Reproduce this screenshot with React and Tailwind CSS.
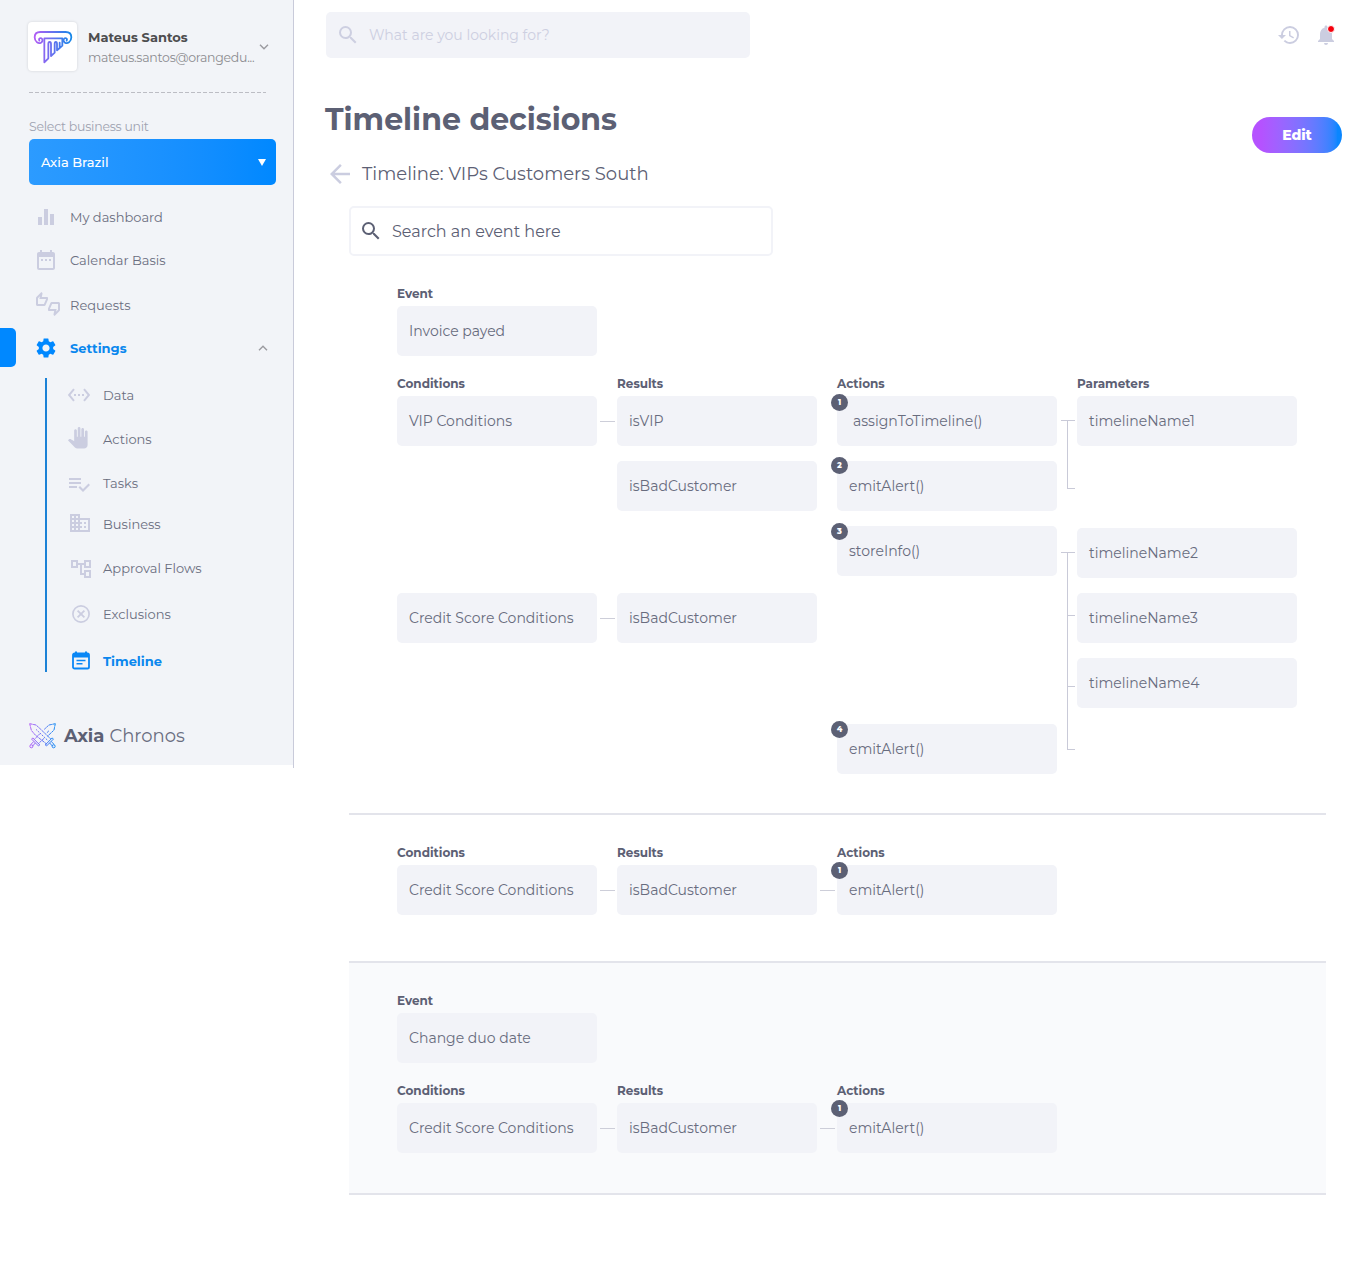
import React from "react";
import {
  MdArrowBack, MdBusiness, MdDateRange, MdEqualizer, MdHistory, MdNotifications,
  MdOutlineAccountTree, MdOutlineThumbsUpDown, MdPanTool, MdSearch, MdSettings, MdSettingsEthernet,
} from "react-icons/md";

function ColumnLogo() {
  return (
    <svg viewBox="24 30 147 147" className="size-[49px]" fill="none" stroke="url(#col)" strokeWidth="5.4" strokeLinejoin="round" strokeLinecap="round">
      <defs>
        <linearGradient id="col" gradientUnits="userSpaceOnUse" x1="42" y1="90" x2="156" y2="90">
          <stop offset="0" stopColor="#b35cf5" />
          <stop offset="1" stopColor="#1488e8" />
        </linearGradient>
      </defs>
      <path d="M58 86 C54 79 64 75 67 82 C70 91 59 97 51 91 C46 87 44 82 44 76 C44 66 51 60 61 60 H137 C147 60 154 66 154 76 C154 82 152 87 147 91 C139 97 128 91 131 82 C134 75 144 79 140 86" />
      <path d="M73 79 H127 V101 L119 108 V92 M73 79 V151 L85 139 V96 C85 88 93 88 93 96 V132 L104 122 V96 C104 88 111 88 111 96 V115 L119 108" />
    </svg>
  );
}

function SwordsLogo() {
  return (
    <svg viewBox="29 39 80 77" className="h-[26px] w-[27px]" fill="none" stroke="url(#swd)" strokeWidth="2.9">
      <defs>
        <linearGradient id="swd" gradientUnits="userSpaceOnUse" x1="30" y1="80" x2="108" y2="80">
          <stop offset="0" stopColor="#b45cf6" />
          <stop offset="1" stopColor="#128af2" />
        </linearGradient>
      </defs>
      <path d="M31 41 L50 45 L62 56 L94 87 M31 41 L36 61 L48 75 L82 102" strokeDasharray="9 1.5" />
      <path d="M50 58 L86 92" strokeDasharray="5 3" />
      <path d="M107 41 L88 45 L74 58 M107 41 L103 60 L84 78 M62 70 L45 87 M74 84 L56 101 M88 62 L82 68" strokeDasharray="9 1.5" />
      <path d="M77 104 L98 83 L101 87 L81 107 Z M61 104 L40 83 L37 87 L57 107 Z" />
      <path d="M90 98 L99 108 M95 94 L104 103 M48 98 L39 108 M43 94 L34 103" />
      <circle cx="102" cy="108" r="4.5" />
      <circle cx="36" cy="108" r="4.5" />
    </svg>
  );
}

function TasksIcon() {
  return (
    <svg viewBox="0 0 24 24" className="size-6" fill="currentColor">
      <path d="M14 10H2v2h12v-2zm0-4H2v2h12V6zM2 16h8v-2H2v2zm19.5-4.5L23 13l-6.99 7-4.51-4.5L13 14l3.01 3 5.49-5.5z" />
    </svg>
  );
}

function ExclusionIcon() {
  return (
    <svg viewBox="0 0 18 18" className="mt-0.5 size-[18px]" fill="none" stroke="currentColor">
      <circle cx="9" cy="9" r="8.1" strokeWidth="1.7" />
      <path d="M5.6 5.6 L12.4 12.4 M12.4 5.6 L5.6 12.4" strokeWidth="1.8" />
    </svg>
  );
}

function TimelineIcon() {
  return (
    <svg viewBox="0 0 18 19" className="h-[19px] w-[18px]" fill="none">
      <path d="M4 0.5 V4 M14 0.5 V4" stroke="#0a87f5" strokeWidth="2" />
      <rect x="1" y="2.5" width="16" height="15" rx="1.6" stroke="#0a87f5" strokeWidth="1.8" />
      <path d="M1 2.5 H17 V6.5 H1 Z" fill="#0a87f5" />
      <path d="M4.5 9.5 H13.5 M4.5 12.8 H10.5" stroke="#0a87f5" strokeWidth="1.6" />
    </svg>
  );
}

function Chevron({ up }) {
  return (
    <svg viewBox="0 0 10 6" className="h-1.5 w-2.5" fill="none" stroke="#9a9a9f" strokeWidth="1.4">
      <path d={up ? "M1 5.2 L5 1.2 L9 5.2" : "M1 0.8 L5 4.8 L9 0.8"} />
    </svg>
  );
}

function MainItem({ icon, label, className = "" }) {
  return (
    <li className={`flex h-6 items-center pl-[34px] ${className}`}>
      <span className="w-9 shrink-0 text-[#cbcde0]">{icon}</span>
      <span className="pt-0.5">{label}</span>
    </li>
  );
}

function SubItem({ icon, label, className = "h-6", iconClass = "pl-0" }) {
  return (
    <li className={`flex items-center ${className}`}>
      <span className={`w-9 shrink-0 text-[#cbcde0] ${iconClass}`}>{icon}</span>
      <span>{label}</span>
    </li>
  );
}

function Sidebar() {
  return (
    <aside className="h-[768px] w-[294px] shrink-0 text-[13px] text-[#6a6e80]">
      <div className="flex h-full border-r border-[#c9cbda]">
        <div className="h-[765px] w-full bg-[#f2f4f8]">
          <div className="flex pt-[22px] pl-7">
            <div className="size-[49px] shrink-0 rounded bg-white shadow-[0_0_3px_rgba(0,0,0,0.14)]">
              <ColumnLogo />
            </div>
            <div className="ml-[11px] w-[167px] pt-[5px] leading-5 whitespace-nowrap">
              <p className="font-bold text-[#4d4d4f]">Mateus Santos</p>
              <p className="pt-px text-[12.5px] leading-[19px] tracking-[-0.26px] text-[#8c8c90]">mateus.santos@orangedu...</p>
            </div>
            <div className="ml-1 pt-[22px]"><Chevron /></div>
          </div>
          <div className="mt-[21px] ml-[29px] h-px w-[237px] bg-[repeating-linear-gradient(90deg,#bcbdc4_0_4px,transparent_4px_6px)]" />
          <p className="mt-[25px] ml-[29px] text-[12.5px] leading-[18px] tracking-[-0.25px] text-[#a0a3b1]">Select business unit</p>
          <button className="mt-[3px] ml-[29px] flex h-[46px] w-[247px] items-center justify-between rounded-[5px] bg-linear-to-r from-[#2c9bff] to-[#0088ff] pr-2.5 pl-3 font-medium text-white">
            <span className="pt-0.5">Axia Brazil</span>
            <svg viewBox="0 0 8 7" className="h-[7px] w-2" fill="white"><path d="M0 0 H8 L4 7 Z" /></svg>
          </button>

          <ul>
            <MainItem className="mt-5" icon={<MdEqualizer size={24} />} label="My dashboard" />
            <MainItem className="mt-[19px]" icon={<MdDateRange size={24} />} label="Calendar Basis" />
            <MainItem className="mt-[21px]" icon={<MdOutlineThumbsUpDown size={24} className="-mt-0.5 ml-0.5" />} label="Requests" />
            <li className="mt-[11px] flex h-[39px] items-center">
              <span className="h-full w-4 rounded-r-[5px] bg-[#0088ff]" />
              <MdSettings size={24} className="ml-[18px] text-[#0088ff]" />
              <span className="ml-3 w-[188px] pt-0.5 font-bold text-[#0a87ee]">Settings</span>
              <Chevron up />
            </li>
          </ul>

          <ul className="mt-[11px] ml-[45px] h-[294px] border-l-2 border-[#1c82d6] pl-5">
            <SubItem className="h-[35px]" iconClass="pb-px" icon={<MdSettingsEthernet size={24} />} label="Data" />
            <SubItem className="mt-[13px] h-7" iconClass="pb-1" icon={<MdPanTool size={21.5} />} label="Actions" />
            <SubItem className="mt-[18px] h-6" icon={<TasksIcon />} label="Tasks" />
            <SubItem className="mt-[17px] h-6" iconClass="pl-px pb-1" icon={<MdBusiness size={24} />} label="Business" />
            <SubItem className="mt-5 h-6" iconClass="pl-0.5" icon={<MdOutlineAccountTree size={24} />} label="Approval Flows" />
            <SubItem className="mt-[22px] h-6" iconClass="pl-[5px] pb-1" icon={<ExclusionIcon />} label="Exclusions" />
            <li className="mt-[23px] flex h-6 items-center font-bold text-[#0a87ee]">
              <span className="w-9 pb-1 pl-[5px]"><TimelineIcon /></span>
              <span>Timeline</span>
            </li>
          </ul>

          <div className="mt-[50px] ml-[29px] flex h-7 items-center text-lg">
            <SwordsLogo />
            <span className="ml-2 font-bold text-[#5c6074]">Axia</span>
            <span className="ml-[5px]">Chronos</span>
          </div>
        </div>
      </div>
    </aside>
  );
}

function Label({ children }) {
  return <h3 className="mb-1 h-4 text-xs leading-4 font-bold">{children}</h3>;
}

function Cell({ children, badge, badgeClass = "-top-[3px]", className = "px-3" }) {
  return (
    <div className={`relative flex h-[50px] w-full items-center rounded-[5px] bg-[#f2f3f8] text-[#686c7e] ${className}`}>
      {badge && (
        <span className={`absolute -left-1.5 flex size-[17px] items-center justify-center rounded-full bg-[#5c6074] pb-px text-[8px] leading-none font-extrabold text-white ${badgeClass}`}>
          {badge}
        </span>
      )}
      {children}
    </div>
  );
}

function Link({ className = "mt-[45px]" }) {
  return <div className={`mr-0.5 ml-[3px] h-px w-[15px] shrink-0 bg-[#cdced9] ${className}`} />;
}

function Tick({ className }) {
  return <div className={`ml-1.5 w-2 border-b border-l border-[#c9cad8] ${className}`} />;
}

function EventBlock({ name }) {
  return (
    <div className="mb-5 w-[200px]">
      <Label>Event</Label>
      <Cell>{name}</Cell>
    </div>
  );
}

function SimpleFlow() {
  return (
    <div className="flex">
      <div className="w-[200px]"><Label>Conditions</Label><Cell>Credit Score Conditions</Cell></div>
      <Link />
      <div className="w-[200px]"><Label>Results</Label><Cell>isBadCustomer</Cell></div>
      <Link />
      <div className="w-[220px]"><Label>Actions</Label><Cell badge="1">emitAlert()</Cell></div>
    </div>
  );
}

function FullFlow() {
  return (
    <div className="flex">
      <div className="w-[200px]">
        <Label>Conditions</Label>
        <Cell>VIP Conditions</Cell>
        <Cell className="mt-[147px] px-3">Credit Score Conditions</Cell>
      </div>
      <div>
        <Link />
        <Link className="mt-[196px]" />
      </div>
      <div className="w-[200px]">
        <Label>Results</Label>
        <Cell>isVIP</Cell>
        <Cell className="mt-[15px] px-3">isBadCustomer</Cell>
        <Cell className="mt-[82px] px-3">isBadCustomer</Cell>
      </div>
      <div className="ml-5 w-[220px]">
        <Label>Actions</Label>
        <Cell badge="1" badgeClass="-top-0.5" className="px-4">assignToTimeline()</Cell>
        <Cell badge="2" badgeClass="-top-1" className="mt-[15px] px-3">emitAlert()</Cell>
        <Cell badge="3" className="mt-[15px] px-3">storeInfo()</Cell>
        <Cell badge="4" className="mt-[148px] px-3">emitAlert()</Cell>
      </div>
      <div className="w-5 pt-11 pl-1">
        <div className="h-px w-3.5 bg-[#c9cad8]" />
        <Tick className="h-[68px]" />
        <div className="mt-[63px] h-px w-3.5 bg-[#c9cad8]" />
        <Tick className="h-[63px]" />
        <Tick className="h-[71px]" />
        <Tick className="h-[63px]" />
      </div>
      <div className="w-[220px]">
        <Label>Parameters</Label>
        <Cell>timelineName1</Cell>
        <Cell className="mt-[82px] px-3">timelineName2</Cell>
        <Cell className="mt-[15px] px-3">timelineName3</Cell>
        <Cell className="mt-[15px] px-3">timelineName4</Cell>
      </div>
    </div>
  );
}

export default function App() {
  return (
    <div className="flex min-h-[1281px] bg-white font-['Montserrat','Open_Sans',sans-serif] text-[#5c6074]">
      <Sidebar />
      <main className="flex-1 text-sm">
        <header className="flex items-center pt-3 pl-8">
          <div className="flex h-[46px] w-[424px] items-center rounded-[5px] bg-[#f2f3f8] pl-2.5 text-[#cdcfe1]">
            <MdSearch size={24} />
            <span className="ml-[9px]">What are you looking for?</span>
          </div>
          <MdHistory size={24} className="ml-[527px] text-[#cbcde0]" />
          <div className="relative ml-[13px]">
            <MdNotifications size={24} className="text-[#cbcde0]" />
            <span className="absolute top-[2px] right-[3px] size-2 rounded-full border border-white bg-[#f5000c]" />
          </div>
        </header>

        <div className="flex justify-between pt-[41px] pr-6 pl-[31px]">
          <h1 className="pt-px text-[30px] leading-10 font-bold">Timeline decisions</h1>
          <button className="mt-[18px] h-9 w-[90px] rounded-full bg-linear-to-r from-[#b552ff] from-10% to-[#0a86ff] to-95% font-extrabold tracking-[-0.1px] text-white">Edit</button>
        </div>

        <div className="mt-1.5 flex h-[30px] items-center pl-[31px] text-lg">
          <MdArrowBack size={30} className="text-[#cbcde0]" />
          <h2 className="ml-[7px]">Timeline: VIPs Customers South</h2>
        </div>

        <div className="mt-[17px] ml-[55px] flex h-[50px] w-[424px] items-center rounded-[5px] border-2 border-[#f2f3f8] pl-2 text-base">
          <MdSearch size={24} />
          <span className="ml-[9px] pt-0.5">Search an event here</span>
        </div>

        <section className="mr-10 ml-[55px] border-b-2 border-[#e3e4eb] pt-[30px] pb-[39px] pl-12">
          <EventBlock name="Invoice payed" />
          <FullFlow />
        </section>
        <section className="mr-10 ml-[55px] pt-[30px] pb-[46px] pl-12">
          <SimpleFlow />
        </section>
        <section className="mr-10 ml-[55px] border-y-2 border-[#e3e4eb] bg-[#f9fafc] pt-[30px] pb-10 pl-12">
          <EventBlock name="Change duo date" />
          <SimpleFlow />
        </section>
      </main>
    </div>
  );
}
